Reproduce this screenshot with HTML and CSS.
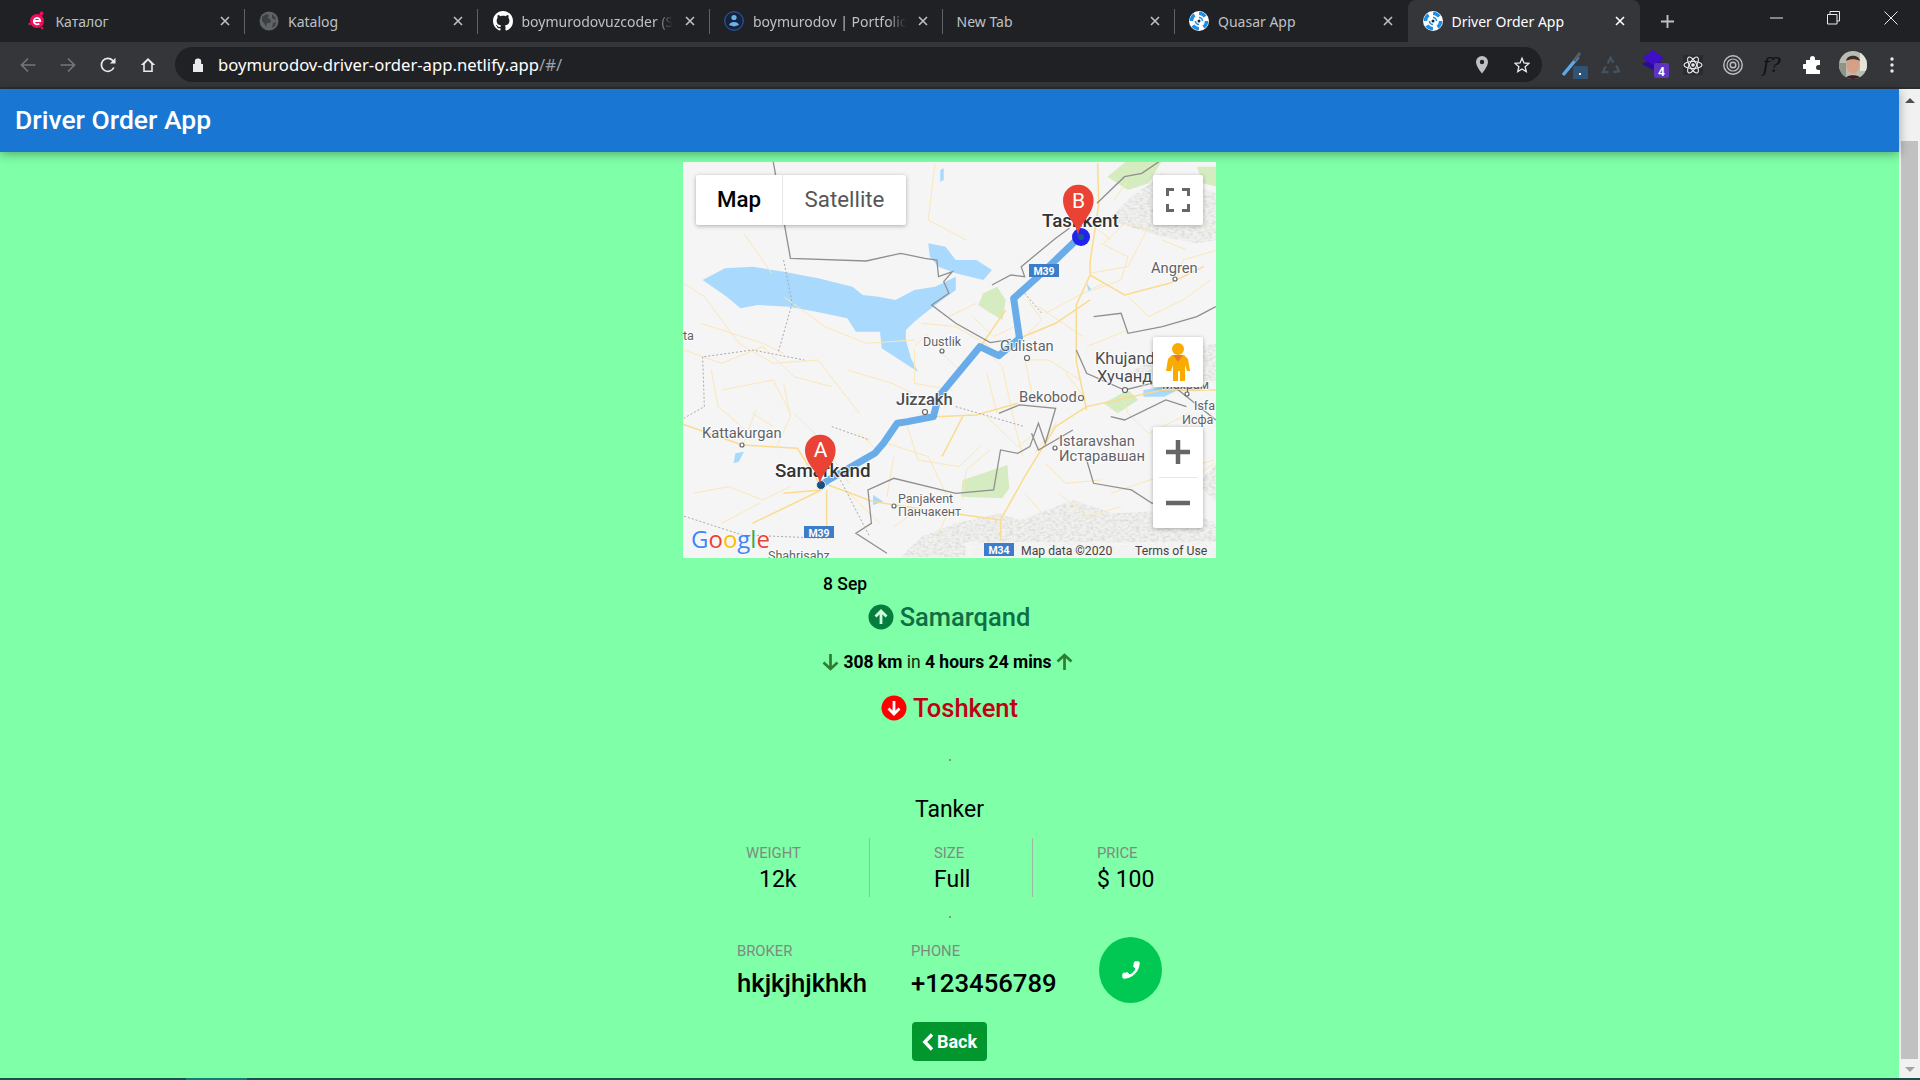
FILE: index.html
```html
<!DOCTYPE html>
<html lang="en">
<head>
    <meta charset="UTF-8">
    <title>Driver Order App</title>
    <link rel="stylesheet" href="styles.css">
</head>
<body>
    <svg class="defs" width="0" height="0">
        <symbol id="x" viewBox="0 0 10 10"><path d="M1 1l8 8M9 1L1 9" fill="none" stroke="currentColor" stroke-width="1.6"/></symbol>
        <symbol id="quasar" viewBox="0 0 20 20">
            <circle cx="10" cy="10" r="10" fill="#fff"/>
            <circle cx="10" cy="10" r="7.6" fill="none" stroke="#1b8fe6" stroke-width="3.4" stroke-dasharray="7 4.9"/>
            <path d="M10 6.5a3.5 3.5 0 0 1 3.5 3.5M10 13.5A3.5 3.5 0 0 1 6.5 10" fill="none" stroke="#1b8fe6" stroke-width="1.6"/>
            <circle cx="10" cy="10" r="1.5" fill="#1d2a3a"/>
        </symbol>
        <clipPath id="avatar-clip"><circle cx="14" cy="14" r="14"/></clipPath>
        <filter id="mottle" x="0" y="0" width="100%" height="100%">
            <feTurbulence type="fractalNoise" baseFrequency=".09 .14" numOctaves="3" seed="4"/>
            <feColorMatrix values="0 0 0 0 .62  0 0 0 0 .62  0 0 0 0 .6  1.6 0 0 0 -.62"/>
            <feComposite in2="SourceAlpha" operator="in" result="noise"/>
            <feMerge><feMergeNode in="SourceGraphic"/><feMergeNode in="noise"/></feMerge>
        </filter>
    </svg>

    <!-- browser tabs -->
    <div class="tabstrip">
        <div class="tab">
            <svg class="favicon" viewBox="0 0 20 20"><circle cx="10" cy="10" r="7" fill="#ee0f5b"/><circle cx="14.500" cy="2.500" r="2" fill="#ee0f5b"/><circle cx="15" cy="17" r="1.300" fill="#ee0f5b"/><circle cx="2.500" cy="13" r="1.200" fill="#ee0f5b"/><path d="M6.800 10h6.400a3.200 3.200 0 1 0-1 2.500" fill="none" stroke="#fff" stroke-width="1.800"/></svg>
            <span class="tab-title">Каталог</span>
            <svg class="tab-x"><use href="#x"/></svg>
        </div>
        <div class="tab">
            <svg class="favicon" viewBox="0 0 20 20"><circle cx="10" cy="10" r="9.500" fill="#5f6368"/><path d="M3 6l4-3 3 1-1 3 3 2-1 3-3 0-1 4-2-4-2-2zM13 3l4 4-1 2-3-2zM14 12l3-1-1 4-3 2z" fill="#3c4043"/></svg>
            <span class="tab-title">Katalog</span>
            <svg class="tab-x"><use href="#x"/></svg>
        </div>
        <div class="tab tab-github">
            <svg class="favicon" viewBox="0 0 16 16"><path fill="#fff" d="M8 0C3.58 0 0 3.58 0 8c0 3.54 2.29 6.53 5.47 7.59.4.07.55-.17.55-.38 0-.19-.01-.82-.01-1.49-2.01.37-2.53-.49-2.69-.94-.09-.23-.48-.94-.82-1.13-.28-.15-.68-.52-.01-.53.63-.01 1.08.58 1.23.82.72 1.21 1.87.87 2.33.66.07-.52.28-.87.51-1.07-1.78-.2-3.64-.89-3.64-3.95 0-.87.31-1.59.82-2.15-.08-.2-.36-1.02.08-2.12 0 0 .67-.21 2.2.82.64-.18 1.32-.27 2-.27.68 0 1.36.09 2 .27 1.53-1.04 2.2-.82 2.2-.82.44 1.1.16 1.92.08 2.12.51.56.82 1.27.82 2.15 0 3.07-1.87 3.75-3.65 3.95.29.25.54.73.54 1.48 0 1.07-.01 1.93-.01 2.2 0 .21.15.46.55.38A8.013 8.013 0 0016 8c0-4.42-3.58-8-8-8z"/></svg>
            <span class="tab-title tab-fade">boymurodovuzcoder (Sardor)</span>
            <svg class="tab-x"><use href="#x"/></svg>
        </div>
        <div class="tab">
            <svg class="favicon" viewBox="0 0 20 20"><circle cx="10" cy="10" r="9.300" fill="#16233f" stroke="#2f62b8" stroke-width="1"/><circle cx="10" cy="6.500" r="2.600" fill="#6cb2ea"/><path d="M5 14c1-4 9-4 10 0l-5 1.500z" fill="#6cb2ea"/></svg>
            <span class="tab-title tab-fade">boymurodov | Portfolio</span>
            <svg class="tab-x"><use href="#x"/></svg>
        </div>
        <div class="tab tab-plain">
            <span class="tab-title">New Tab</span>
            <svg class="tab-x"><use href="#x"/></svg>
        </div>
        <div class="tab tab-nosep">
            <svg class="favicon"><use href="#quasar"/></svg>
            <span class="tab-title">Quasar App</span>
            <svg class="tab-x"><use href="#x"/></svg>
        </div>
        <div class="tab tab-active">
            <svg class="favicon"><use href="#quasar"/></svg>
            <span class="tab-title">Driver Order App</span>
            <svg class="tab-x"><use href="#x"/></svg>
        </div>
        <svg class="newtab" viewBox="0 0 16 16"><path d="M8 1v14M1 8h14" stroke="#bdc1c6" stroke-width="2"/></svg>
        <div class="winbtns">
            <svg viewBox="0 0 14 14"><path d="M0 7h13" stroke="#e8eaed" stroke-width="1"/></svg>
            <svg viewBox="0 0 14 14"><path d="M.5 3.500h9.500v9.500H.5zM3 3.500V.5h9.500V10H10" fill="none" stroke="#e8eaed" stroke-width="1"/></svg>
            <svg viewBox="0 0 14 14"><path d="M.5.5l13 13M13.500.5l-13 13" stroke="#e8eaed" stroke-width="1"/></svg>
        </div>
    </div>

    <!-- address bar -->
    <div class="toolbar">
        <svg class="nav-ico" viewBox="0 0 16 16"><path d="M15.500 8H1.500M8 1.500L1.500 8 8 14.500" fill="none" stroke="#74777a" stroke-width="1.700"/></svg>
        <svg class="nav-ico" viewBox="0 0 16 16"><path d="M.5 8h14M8 1.500L14.500 8 8 14.500" fill="none" stroke="#74777a" stroke-width="1.700"/></svg>
        <svg class="nav-ico" viewBox="0 0 16 16"><path d="M13.800 10.500A6.500 6.500 0 1 1 12.600 3.400L14.800 5.500" fill="none" stroke="#e8eaed" stroke-width="1.700"/><path d="M15.500 .8v5.600H9.900z" fill="#e8eaed"/></svg>
        <svg class="nav-ico" viewBox="0 0 16 16"><path d="M8 1L.8 8h2.400v7h9.600V8h2.400zM4.800 13.500V7L8 3.500 11.200 7v6.500z" fill="#e8eaed" fill-rule="evenodd"/></svg>
        <div class="omnibox">
            <svg class="lock" viewBox="0 0 12 14"><path d="M1 6h10v8H1zM3 6V3.800a3 3 0 0 1 6 0V6" fill="#e8eaed"/><path d="M3.500 6V3.800a2.500 2.500 0 0 1 5 0V6" fill="none" stroke="#e8eaed" stroke-width="1.400"/></svg>
            <span class="url">boymurodov-driver-order-app.netlify.app<span class="url-dim">/#/</span></span>
            <svg class="omni-ico" viewBox="0 0 14 18"><path d="M7 0a6 6 0 0 0-6 6c0 4.500 6 11.500 6 11.500S13 10.500 13 6a6 6 0 0 0-6-6zm0 8.200A2.200 2.200 0 1 1 7 3.800a2.200 2.200 0 0 1 0 4.400z" fill="#bdc1c6" fill-rule="evenodd"/></svg>
            <svg class="omni-ico omni-star" viewBox="0 0 18 18"><path d="M9 1.500l2.200 5.200 5.600.5-4.300 3.700 1.300 5.500L9 13.500l-4.800 2.900 1.300-5.500L1.200 7.200l5.600-.5z" fill="none" stroke="#e8eaed" stroke-width="1.500"/></svg>
        </div>
        <div class="exts">
            <svg class="ext ext-pen" viewBox="0 0 28 28"><path d="M2 24L17 6" stroke="#5aa9ea" stroke-width="3.500"/><path d="M13 10l6-8" stroke="#5a5d61" stroke-width="3"/><rect x="12" y="15" width="15" height="14" rx="2" fill="#2f5476"/><rect x="18" y="22" width="2" height="2" fill="#fff"/></svg>
            <svg class="ext ext-recycle" viewBox="0 0 20 20"><path d="M7 8l3-6 3 5M16 10l3 6-6 1M8 17H2l3-6" fill="none" stroke="#46535f" stroke-width="2.400"/></svg>
            <svg class="ext ext-stack" viewBox="0 0 30 30"><path d="M2 14l11 6 11-6-11-6z" fill="#2c0a9c"/><path d="M2 8l11-8 11 8-11 7z" fill="#3e0fc4"/><rect x="14" y="13" width="15" height="15" rx="2" fill="#5e35c0"/><text class="ext-badge" x="21.500" y="25.500">4</text></svg>
            <svg class="ext ext-atom" viewBox="0 0 20 20"><rect width="20" height="20" fill="#2a2b2e"/><g fill="none" stroke="#e8eaed" stroke-width="1.100"><ellipse cx="10" cy="10" rx="9" ry="3.500"/><ellipse cx="10" cy="10" rx="9" ry="3.500" transform="rotate(60 10 10)"/><ellipse cx="10" cy="10" rx="9" ry="3.500" transform="rotate(120 10 10)"/></g><circle cx="10" cy="10" r="1.800" fill="#e8eaed"/></svg>
            <svg class="ext ext-target" viewBox="0 0 20 20"><g fill="none" stroke="#bdc1c6"><circle cx="10" cy="10" r="9.200" stroke-width="1.400"/><circle cx="10" cy="10" r="6" stroke-width="1.200"/><circle cx="10" cy="10" r="2.800" stroke-width="1.400"/></g></svg>
            <span class="ext-func">f?</span>
            <svg class="ext ext-puzzle" viewBox="0 0 20 20"><path d="M7 3.500a2.500 2.500 0 0 1 5 0V5h5v5h-1.500a2.500 2.500 0 0 0 0 5H17v4H3v-5H1.500a2.500 2.500 0 0 1 0-5H3V5h4z" fill="#fff"/></svg>
            <svg class="avatar" viewBox="0 0 28 28"><g clip-path="url(#avatar-clip)"><rect width="28" height="28" fill="#b9bcb0"/><rect width="7" height="28" y="12" fill="#8f9487"/><rect x="21" width="7" height="20" fill="#e4e4d8"/><ellipse cx="14" cy="14" rx="6.500" ry="8.500" fill="#d79f86"/><path d="M7 10c1-7 13-7 14 0-4-2.500-10-2.500-14 0z" fill="#3c3029"/><path d="M6 28c1-5 15-5 16 0z" fill="#3a1f24"/></g></svg>
            <svg class="dots" viewBox="0 0 4 16"><circle cx="2" cy="2" r="1.700" fill="#e8eaed"/><circle cx="2" cy="8" r="1.700" fill="#e8eaed"/><circle cx="2" cy="14" r="1.700" fill="#e8eaed"/></svg>
        </div>
    </div>

    <div class="viewport">
        <div class="page">
            <header class="app-header">Driver Order App</header>

            <main class="content">
                <div class="map">
                    <svg class="map-canvas" width="534" height="396" viewBox="0 0 534 396">
                        <rect width="534" height="396" fill="#f5f5f5"/>
                        <!-- coordinates below were read off a scaled crop, hence the transform -->
                        <g transform="translate(-2.750 -2) scale(.3444 .3333)">
                            <path class="hills" filter="url(#mottle)" d="M640 1192l60-62 100-40 130-30 60 20 150-60 120 40 200-10 100 40 0-60-60-60 60-60v282zM1240 180l60-60 100-80 60 30 100 30v140l-60 10-100-20zM1300 640l100-60 160-30v110l-160 20z"/>
                            <path class="green" d="M820 960l130-45 5 70-20 30-120-5zM880 400l40-20 25 40-10 60-40-25-30-20zM1230 730l70-40 30 30-60 40zM1240 50l60-50h100l-40 70-60 20zM1500 20h58v60l-40-10z"/>
                            <path class="water" d="M65 360l65-35 80-5 90 15 100 20 100 25 30 25 45 5 50 10 55-30 60-10 60-30 0 40-40 30-50 40-30 25-25 25 0 30 15 55 20 40-45-30-60-40-5-50-70 0-25-40-90-20-80-15-90-5-50 10-40-35zM720 250l50 10 30 40 60 0 45 30-25 30-80-20-50-20-25-30zM755 30l10-5v35l-10 5zM160 880l25-5-15 30-15 5zM1345 690l60-10 40 10-40 20-60 0zM1180 370l15 20-10 5zM560 1005l30 20-30 10z"/>

                            <g class="roads-thin">
                                <path d="M740 10l-20 170 110 60M10 370l60 40 100 140 100 60 130-10 60 80 60 80M60 490l180 60 60 30M185 220l80 120M300 410l120 90 120 50 140-10M700 490l100 10 100 60M680 570l0 100 110 20M675 700l-60-30-130-40M875 560l60 60 40 190 20 80M1000 590l20 110M1010 420l40 60-50 50M1190 340l110-20 60-120M1220 250l80 40-20 70-80 30M1180 180l70 60M1440 360l20-60 100-30M120 690l150-30 50 100M180 860l40-110M330 760l80 80 80 130M520 820l60 60M600 850l120 40 60 130M890 640l30 120M1010 600l60 0 90 60M1060 910l60 60 100-10M1250 1000l200-70 100-30M480 990l100 100M1180 560l120-50M1040 440l130 90"/>
                                <path d="M10 570l110 40 120-50 90 90 110 30M90 630l20 110 80 70M300 670l20 100-40 90M40 1000l100-20 100 40 80-40M120 1090l110-60M210 760l60 40M660 800l30 100 120 20 60-60M620 890l-20 120M820 1020l10-90 70-60M890 770l90 90 50-40M720 520l-40 40M760 580l60 60M780 470l80-40M850 470l60 60 60-30M1060 460l110-60 60-30M1300 410l60 60 100-50 80-60M1230 250l60-60 70 20M1400 240l70 30M1460 150l80 50M1260 120l40-60M1090 790l-60 90M1120 640l60 80M1280 700l20 60 60 60 120-60M1100 1000l80 70 100-30M1460 800l80-30M1440 900l70 40 40-30M1000 1000l60 70M780 1050l-30 70M620 1100l70-50"/>
                            </g>
                            <g class="roads-main">
                                <path d="M1212 10l3 125-25 170v40l-40 90v170l30 145M1190 345l100 60 130-35 100-50M0 790l180 65 160 10 67 110M430 975l130 50 160 25 210 30v60M425 990v150M300 1000l110-10-200 100M735 770l125-5 120-35M1180 740l220-50h155M1180 740l-90 60-90 150-70 130M985 535l105-45 100-70M875 555l70-105M760 890l60-120"/>
                            </g>
                            <g class="borders">
                                <path d="M270 5l50 290 220 8 100-23 70 15 35 5 5 50 40-15-25 30 15 35-50 35 70 55 100 58 60-10M905 375l55-30 40 5-10-30 100-85 40-30M1210 130l80-80 50-10 50-35M1150 570l30 70 110 50 120-30 145 120M925 760l60-25 105 10-30 105-20-60-25 70-35 20-50-10-20 120-110 10-180-45-75 35 10 100-45 30 90 60M1200 470l80-10 20 60 100-20 100-30 55-30M1250 770l40 10 120-60 60 20M1180 900l20 70 110 20 60 40 70-20 70 40M1020 820l20 50 100-60"/>
                            </g>
                            <g class="borders-dash">
                                <path d="M300 300l25 130-40 145M70 590l140-20 150 30M65 590l5 150-60 35M800 740l200 60M440 800l110 40M460 950l90 180M0 1065l180 60 240 10M1000 400l50 60"/>
                            </g>
                            <path class="route" d="M410 975l20-15 135-80 25-30 40-60 30-5 75-15 15-60 120-150 55 27 60-52-17-120 92-85 100-100"/>
                        </g>

                        <g class="labels">
                            <text class="lbl-major" x="359" y="65">Tashkent</text>
                            <text class="lbl-major" x="92" y="315">Samarkand</text>
                            <text class="lbl-city" x="213" y="243">Jizzakh</text>
                            <text class="lbl" x="468" y="111">Angren</text>
                            <text class="lbl lbl-sm" x="240" y="184">Dustlik</text>
                            <text class="lbl" x="317" y="189">Gulistan</text>
                            <text class="lbl lbl-lg" x="412" y="202">Khujand</text>
                            <text class="lbl lbl-lg" x="414" y="220">Хучанд</text>
                            <text class="lbl" x="336" y="240">Bekobod</text>
                            <text class="lbl" x="376" y="284">Istaravshan</text>
                            <text class="lbl" x="376" y="299">Истаравшан</text>
                            <text class="lbl" x="19" y="276">Kattakurgan</text>
                            <text class="lbl lbl-sm" x="215" y="341">Panjakent</text>
                            <text class="lbl lbl-sm" x="215" y="354">Панчакент</text>
                            <text class="lbl lbl-sm" x="511" y="248">Isfa</text>
                            <text class="lbl lbl-sm" x="499" y="262">Исфа</text>
                            <text class="lbl lbl-sm" x="479" y="227">Махрам</text>
                            <text class="lbl lbl-sm" x="0" y="178">ta</text>
                            <text class="lbl lbl-sm" x="85" y="398">Shahrisabz</text>
                        </g>
                        <g class="towns">
                            <circle cx="259" cy="189" r="2"/><circle cx="344" cy="196" r="2.500"/><circle cx="242" cy="250" r="2.500"/>
                            <circle cx="492" cy="117" r="2"/><circle cx="442" cy="228" r="2.500"/><circle cx="398" cy="236" r="2.500"/>
                            <circle cx="372" cy="286" r="2"/><circle cx="59" cy="283" r="2"/><circle cx="211" cy="344" r="2"/><circle cx="504" cy="232" r="2"/>
                        </g>

                        <g class="shield"><rect x="346" y="102" width="30" height="13"/><text x="361" y="112.500">M39</text></g>
                        <g class="shield"><rect x="121" y="364" width="30" height="12"/><text x="136" y="374.500">M39</text></g>

                        <rect class="foot-bg" x="282" y="380" width="252" height="16"/>
                        <g class="shield"><rect x="301" y="381" width="30" height="13"/><text x="316" y="391.500">M34</text></g>
                        <text class="foot" x="338" y="393">Map data ©2020</text>
                        <text class="foot" x="452" y="393">Terms of Use</text>

                        <text class="google" x="8" y="386"><tspan fill="#4285f4">G</tspan><tspan fill="#ea4335">o</tspan><tspan fill="#fbbc05">o</tspan><tspan fill="#4285f4">g</tspan><tspan fill="#34a853">l</tspan><tspan fill="#ea4335">e</tspan></text>

                        <circle cx="398" cy="75" r="9" fill="#2323ee"/>
                        <circle cx="398" cy="75" r="3" fill="#1a5c92"/>
                        <circle cx="138" cy="323" r="4.500" fill="#154f86" stroke="#dfeaf4" stroke-width="1"/>
                        <g class="pin"><path d="M137 323c-1-14-15-20-15-35a15.300 15.300 0 0 1 30.600 0c0 15-14 21-15.600 35z"/><text x="137.500" y="295">A</text></g>
                        <g class="pin"><path d="M395 74c-1-14-15-21-15-36a15.300 15.300 0 0 1 30.600 0c0 15-14 22-15.600 36z"/><text x="395.500" y="46">B</text></g>
                    </svg>

                    <div class="map-types">
                        <div class="map-type map-type-on">Map</div>
                        <div class="map-type">Satellite</div>
                    </div>
                    <div class="map-btn map-full">
                        <svg width="24" height="24" viewBox="0 0 24 24"><path d="M1.500 8V1.500H8M16 1.500h6.500V8M22.500 16v6.500H16M8 22.500H1.500V16" fill="none" stroke="#666" stroke-width="3"/></svg>
                    </div>
                    <div class="map-btn map-peg">
                        <svg width="24" height="38" viewBox="0 0 24 38"><circle cx="12" cy="6" r="6" fill="#f9ab00"/><path d="M6 12h12l4 4 2 12h-3l-2-6v16h-5V28h-2v10H7V22l-2 6H0l2-12z" fill="#f9ab00"/><path d="M7 12h10l-5 7z" fill="#e8792b"/></svg>
                    </div>
                    <div class="map-zoom">
                        <div class="map-zoom-btn"><svg width="24" height="24" viewBox="0 0 24 24"><path d="M12 0v24M0 12h24" stroke="#666" stroke-width="4.500"/></svg></div>
                        <div class="map-zoom-line"></div>
                        <div class="map-zoom-btn"><svg width="24" height="24" viewBox="0 0 24 24"><path d="M0 12h24" stroke="#666" stroke-width="4.500"/></svg></div>
                    </div>
                </div>

                <div class="date">8 Sep</div>

                <div class="place place-from">
                    <svg width="26" height="26" viewBox="0 0 26 26"><circle cx="13" cy="13" r="12.500" fill="#067d3f"/><path d="M13 20V7M7.500 12.500L13 7l5.500 5.500" fill="none" stroke="#c9ffd9" stroke-width="2.800"/></svg>
                    <span>Samarqand</span>
                </div>

                <div class="route-info">
                    <svg width="17" height="18" viewBox="0 0 17 18"><path d="M8.500 1v15M1.500 9.500l7 6.500 7-6.500" fill="none" stroke="#2e7d32" stroke-width="2.700"/></svg>
                    <span><b>308 km</b> in <b>4 hours 24 mins</b></span>
                    <svg width="17" height="18" viewBox="0 0 17 18"><path d="M8.500 17V2M1.500 8.500l7-6.500 7 6.500" fill="none" stroke="#2e7d32" stroke-width="2.700"/></svg>
                </div>

                <div class="place place-to">
                    <svg width="26" height="26" viewBox="0 0 26 26"><circle cx="13" cy="13" r="12.500" fill="#f00"/><path d="M13 6v13M7.500 13.500L13 19l5.500-5.500" fill="none" stroke="#fff" stroke-width="2.800"/></svg>
                    <span>Toshkent</span>
                </div>

                <div class="tiny-dot tiny-dot-first"></div>

                <div class="truck">Tanker</div>

                <div class="stats">
                    <div class="stat">
                        <div class="label">WEIGHT</div>
                        <div class="stat-value stat-value-first">12k</div>
                    </div>
                    <div class="stat">
                        <div class="label">SIZE</div>
                        <div class="stat-value">Full</div>
                    </div>
                    <div class="stat">
                        <div class="label">PRICE</div>
                        <div class="stat-value">$ 100</div>
                    </div>
                </div>

                <div class="tiny-dot tiny-dot-second"></div>

                <div class="contact">
                    <div class="contact-col contact-broker">
                        <div class="label">BROKER</div>
                        <div class="contact-value">hkjkjhjkhkh</div>
                    </div>
                    <div class="contact-col contact-phone">
                        <div class="label">PHONE</div>
                        <div class="contact-value">+123456789</div>
                    </div>
                    <div class="call-btn">
                        <svg width="22" height="22" viewBox="0 0 24 24"><path fill="#fff" stroke="#fff" stroke-width="1" transform="matrix(-1 0 0 1 24 0)" d="M6.620 10.790c1.440 2.830 3.760 5.140 6.590 6.590l2.200-2.200c.27-.27.670-.36 1.020-.24 1.120.37 2.330.57 3.570.57.550 0 1 .45 1 1V20c0 .55-.45 1-1 1-9.390 0-17-7.610-17-17 0-.55.45-1 1-1h3.500c.55 0 1 .45 1 1 0 1.250.2 2.450.57 3.570.11.35.03.74-.25 1.020l-2.200 2.200z"/></svg>
                    </div>
                </div>

                <div class="back-btn">
                    <svg width="12" height="18" viewBox="0 0 12 18"><path d="M10 1.500L2.800 9l7.200 7.500" fill="none" stroke="#fff" stroke-width="3.400"/></svg>
                    <span>Back</span>
                </div>
            </main>
        </div>

        <div class="scrollbar">
            <div class="scroll-arrow scroll-arrow-up"></div>
            <div class="scroll-thumb"></div>
            <div class="scroll-arrow scroll-arrow-down"></div>
        </div>
    </div>

    <!-- the taskbar peeks in at the very bottom -->
    <div class="taskbar-edge"><div class="taskbar-app"></div></div>
</body>
</html>
```

FILE: styles.css
```css
* {
    margin: 0;
    padding: 0;
    box-sizing: border-box;
}
html, body {
    height: 100%;
}
body {
    width: 1920px;
    height: 1080px;
    overflow: hidden;
    display: flex;
    flex-direction: column;
    font-family: Roboto, "Liberation Sans", sans-serif;
    background: #7fffa7;
}
.defs {
    position: absolute;
}

/* tabs */
.tabstrip {
    height: 42px;
    flex: none;
    display: flex;
    padding-left: 12.500px;
    background: #202124;
    font-family: "Noto Sans", "Open Sans", sans-serif;
    font-size: 14px;
    color: #bdc1c6;
}
.tab {
    width: 232.500px;
    height: 42px;
    flex: none;
    display: flex;
    align-items: center;
    padding: 0 15px 0 14px;
    position: relative;
}
.tab::after {
    content: "";
    position: absolute;
    right: 0;
    top: 9px;
    height: 25px;
    width: 1px;
    background: #5f6368;
}
.tab-nosep::after, .tab-active::after {
    display: none;
}
.tab-active {
    background: #35363a;
    border-radius: 8px 8px 0 0;
    color: #fff;
    padding-left: 15px;
}
.tab-github {
    padding-left: 15px;
}
.favicon {
    width: 20px;
    height: 20px;
    flex: none;
    margin-right: 9px;
}
.tab-title {
    flex: 1;
    white-space: nowrap;
    overflow: hidden;
}
.tab-fade {
    -webkit-mask-image: linear-gradient(to right, #000 88%, transparent 100%);
    mask-image: linear-gradient(to right, #000 88%, transparent 100%);
}
.tab-x {
    width: 10px;
    height: 10px;
    flex: none;
    margin-left: 12px;
    color: #bdc1c6;
}
.tab-active .tab-x {
    color: #fff;
}
.newtab {
    width: 15px;
    height: 15px;
    margin: 14px 0 0 20px;
}
.winbtns {
    margin-left: auto;
    display: flex;
    gap: 43px;
    padding: 11px 22px 0 0;
}
.winbtns svg {
    width: 14px;
    height: 14px;
}

/* address bar */
.toolbar {
    height: 47px;
    flex: none;
    display: flex;
    align-items: flex-start;
    padding: 15px 0 0 20px;
    background: #35363a;
    border-bottom: 2px solid #2c2d30;
    position: relative;
}
.nav-ico {
    width: 16px;
    height: 16px;
    margin-right: 24px;
    flex: none;
}
.omnibox {
    width: 1367px;
    height: 35px;
    margin: -10px 0 0 -5px;
    flex: none;
    display: flex;
    align-items: center;
    padding: 0 12px 0 17px;
    border-radius: 18px;
    background: #202124;
}
.lock {
    width: 12px;
    height: 14px;
    flex: none;
    margin-right: 14px;
}
.url {
    flex: 1;
    font-family: "Noto Sans", "Open Sans", sans-serif;
    font-size: 16.650px;
    color: #fff;
}
.url-dim {
    color: #9aa0a6;
}
.omni-ico {
    width: 16px;
    height: 18px;
    margin-left: 20px;
}
.omni-star {
    margin-left: 24px;
}
.exts {
    display: flex;
    align-items: center;
    height: 28px;
    margin: -6px 0 0 18.500px;
}
.ext {
    flex: none;
}
.ext-pen {
    width: 28px;
    height: 28px;
}
.ext-recycle {
    width: 19px;
    height: 19px;
    margin-left: 12px;
}
.ext-stack {
    width: 30px;
    height: 30px;
    margin-left: 20px;
}
.ext-badge {
    font: 700 12px Roboto, sans-serif;
    fill: #fff;
    text-anchor: middle;
}
.ext-atom {
    width: 20px;
    height: 20px;
    margin-left: 13px;
}
.ext-target {
    width: 20px;
    height: 20px;
    margin-left: 20px;
}
.ext-func {
    font: italic 20px "DejaVu Serif", "Liberation Serif", serif;
    color: #111;
    margin-left: 20px;
    width: 22px;
    flex: none;
}
.ext-puzzle {
    width: 20px;
    height: 20px;
    margin-left: 18px;
}
.avatar {
    width: 28px;
    height: 28px;
    margin-left: 16px;
    flex: none;
}
.dots {
    width: 4px;
    height: 16px;
    margin-left: 23px;
    flex: none;
}

/* page */
.viewport {
    flex: 1;
    display: flex;
    min-height: 0;
}
.page {
    flex: 1;
    min-width: 0;
    background: #7fffa7;
}
.app-header {
    height: 63px;
    display: flex;
    align-items: center;
    padding: 0 0 2px 15px;
    background: #1976d2;
    color: #fff;
    font-size: 26.500px;
    font-weight: 500;
    box-shadow: 0 2px 10px rgba(0, 0, 0, .35);
    position: relative;
}
.content {
    width: 533px;
    margin: 0 auto;
    padding-top: 10px;
}

/* map */
.map {
    width: 533px;
    height: 396px;
    position: relative;
    overflow: hidden;
}
.map-canvas {
    display: block;
}
.water { fill: #a9d9fc; }
.green { fill: #d5ebc0; }
.hills { fill: #f1f1ef; }
.roads-thin path {
    fill: none;
    stroke: #fbe7b8;
    stroke-width: 1px;
    vector-effect: non-scaling-stroke;
}
.roads-main path {
    fill: none;
    stroke: #fbdc8e;
    stroke-width: 1.500px;
    vector-effect: non-scaling-stroke;
}
.borders path {
    fill: none;
    stroke: #8f8f8f;
    stroke-width: 1.300px;
    vector-effect: non-scaling-stroke;
}
.borders-dash path {
    fill: none;
    stroke: #aaa;
    stroke-width: 1px;
    stroke-dasharray: 2 2;
    vector-effect: non-scaling-stroke;
}
.route {
    fill: none;
    stroke: #4f9fe8;
    stroke-opacity: .85;
    stroke-width: 7px;
    stroke-linejoin: round;
    vector-effect: non-scaling-stroke;
}
.labels text {
    paint-order: stroke;
    stroke: #fff;
    stroke-opacity: .8;
    stroke-width: 2px;
    stroke-linejoin: round;
}
.lbl {
    font-size: 14.700px;
    fill: #5f6368;
}
.lbl-sm {
    font-size: 12.500px;
}
.lbl-lg {
    font-size: 16.500px;
    fill: #4a4d51;
}
.lbl-city {
    font-size: 16.500px;
    font-weight: 500;
    fill: #4a4d51;
}
.lbl-major {
    font-size: 18.800px;
    font-weight: 500;
    fill: #333;
}
.towns circle {
    fill: #fff;
    stroke: #666;
    stroke-width: 1.200px;
}
.shield rect {
    fill: #3d7cc9;
}
.shield text {
    font-size: 10.500px;
    font-weight: 700;
    fill: #fff;
    text-anchor: middle;
}
.foot-bg {
    fill: #f5f5f5;
    fill-opacity: .75;
}
.foot {
    font-size: 12.200px;
    fill: #444;
}
.google {
    font-family: "Open Sans", sans-serif;
    font-size: 24px;
    font-weight: 400;
    paint-order: stroke;
    stroke: #fff;
    stroke-width: 1px;
}
.pin path {
    fill: #ea4335;
}
.pin text {
    font-size: 21px;
    fill: #fff;
    text-anchor: middle;
}
.map-types {
    position: absolute;
    left: 13px;
    top: 13px;
    display: flex;
    background: #fff;
    border-radius: 2px;
    box-shadow: 0 1px 4px rgba(0, 0, 0, .3);
    font-size: 22.300px;
}
.map-type {
    height: 50px;
    line-height: 48px;
    text-align: center;
    width: 123px;
    color: #565656;
}
.map-type-on {
    width: 87px;
    color: #000;
    font-weight: 500;
    border-right: 1px solid #e6e6e6;
}
.map-btn {
    position: absolute;
    right: 13px;
    width: 50px;
    height: 50px;
    display: flex;
    align-items: center;
    justify-content: center;
    background: #fff;
    border-radius: 2px;
    box-shadow: 0 1px 4px rgba(0, 0, 0, .3);
}
.map-full {
    top: 13px;
}
.map-peg {
    top: 175px;
}
.map-zoom {
    position: absolute;
    right: 13px;
    top: 265px;
    width: 50px;
    height: 101px;
    background: #fff;
    border-radius: 2px;
    box-shadow: 0 1px 4px rgba(0, 0, 0, .3);
}
.map-zoom-btn {
    height: 50px;
    display: flex;
    align-items: center;
    justify-content: center;
}
.map-zoom-line {
    height: 1px;
    margin: 0 6px;
    background: #e6e6e6;
}

/* trip */
.date {
    margin-top: 13px;
    padding-left: 140px;
    height: 26px;
    line-height: 26px;
    font-size: 17.500px;
    font-weight: 500;
    color: #000;
}
.place {
    height: 40px;
    display: flex;
    align-items: center;
    justify-content: center;
    gap: 6px;
    font-size: 25.500px;
    font-weight: 500;
}
.place-from {
    color: #0f6e45;
    padding-right: 1px;
}
.place-to {
    margin-top: 11px;
    color: #c10015;
}
.route-info {
    height: 30px;
    margin-top: 10px;
    padding-right: 4px;
    display: flex;
    align-items: center;
    justify-content: center;
    gap: 4px;
    font-size: 17.500px;
    color: #0b2a14;
}
.route-info b {
    font-weight: 700;
    color: #000;
}
.tiny-dot {
    width: 2px;
    height: 2px;
    margin-left: 266px;
    background: #8f8a9c;
}
.tiny-dot-first {
    margin-top: 31px;
}
.tiny-dot-second {
    margin-top: 19px;
}
.truck {
    margin-top: 32px;
    height: 34px;
    line-height: 34px;
    text-align: center;
    font-size: 23px;
    color: #000;
}

/* cargo */
.stats {
    margin-top: 11px;
    height: 59px;
    display: grid;
    grid-template-columns: 187px 163px 183px;
}
.stat {
    padding: 5px 0 0 63px;
    border-right: 1px solid #9fb8a6;
}
.stat:nth-child(2) {
    padding-left: 64px;
}
.stat:last-child {
    padding-left: 64px;
    border-right: 0;
}
.label {
    height: 20px;
    line-height: 20px;
    font-size: 14.800px;
    color: #7d8b80;
}
.stat-value {
    height: 34px;
    line-height: 34px;
    font-size: 23px;
    color: #000;
}
.stat-value-first {
    padding-left: 13px;
}

/* broker */
.contact {
    margin-top: 19px;
    height: 66px;
    display: flex;
    padding-left: 54px;
}
.contact-col {
    padding-top: 4px;
    flex: none;
}
.contact-broker {
    width: 174px;
}
.contact-phone {
    width: 188px;
}
.contact-value {
    margin-top: 6px;
    height: 32px;
    line-height: 32px;
    font-size: 25.700px;
    font-weight: 500;
    color: #000;
}
.call-btn {
    width: 63px;
    height: 66px;
    flex: none;
    display: flex;
    align-items: center;
    justify-content: center;
    border-radius: 50%;
    background: #00c853;
}
.back-btn {
    width: 75px;
    height: 39px;
    margin: 19px auto 0;
    display: flex;
    align-items: center;
    justify-content: center;
    gap: 3px;
    border-radius: 4px;
    background: #02962f;
    color: #fff;
    font-size: 18px;
    font-weight: 700;
}

/* scrollbar */
.scrollbar {
    width: 21px;
    flex: none;
    display: flex;
    flex-direction: column;
    align-items: center;
    background: #f1f1f1;
}
.scroll-thumb {
    width: 17px;
    flex: 1;
    margin: 38px 0 8px;
    background: #c1c1c1;
}
.scroll-arrow {
    width: 0;
    height: 0;
    flex: none;
    border-left: 5px solid transparent;
    border-right: 5px solid transparent;
}
.scroll-arrow-up {
    margin-top: 9px;
    border-bottom: 5px solid #505050;
}
.scroll-arrow-down {
    margin-bottom: 6px;
    border-top: 5px solid #a3a3a3;
}
.taskbar-edge {
    height: 2px;
    flex: none;
    padding-left: 186px;
    background: #17524a;
}
.taskbar-app {
    width: 61px;
    height: 2px;
    background: #0b8075;
}
```
